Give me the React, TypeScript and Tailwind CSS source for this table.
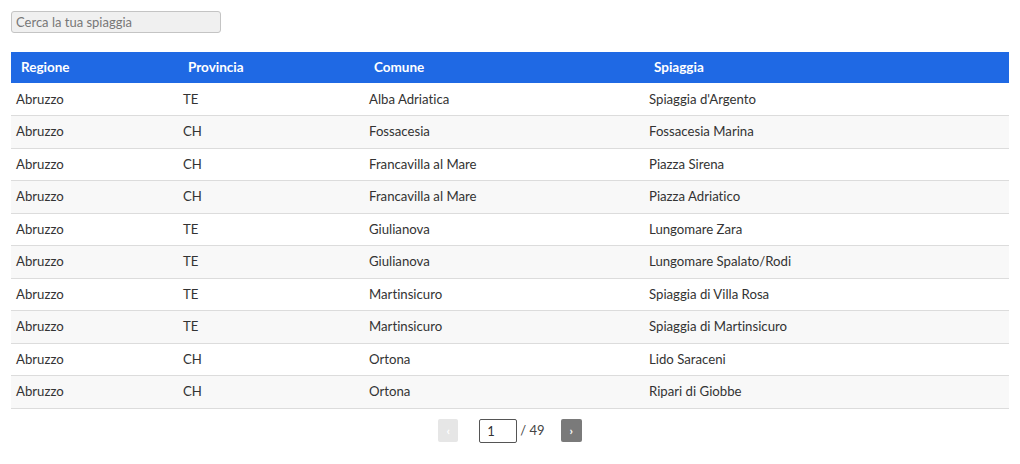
import { useState } from "react";

const rows = [
  ["Abruzzo", "TE", "Alba Adriatica", "Spiaggia d'Argento"],
  ["Abruzzo", "CH", "Fossacesia", "Fossacesia Marina"],
  ["Abruzzo", "CH", "Francavilla al Mare", "Piazza Sirena"],
  ["Abruzzo", "CH", "Francavilla al Mare", "Piazza Adriatico"],
  ["Abruzzo", "TE", "Giulianova", "Lungomare Zara"],
  ["Abruzzo", "TE", "Giulianova", "Lungomare Spalato/Rodi"],
  ["Abruzzo", "TE", "Martinsicuro", "Spiaggia di Villa Rosa"],
  ["Abruzzo", "TE", "Martinsicuro", "Spiaggia di Martinsicuro"],
  ["Abruzzo", "CH", "Ortona", "Lido Saraceni"],
  ["Abruzzo", "CH", "Ortona", "Ripari di Giobbe"],
];

const columns = ["Regione", "Provincia", "Comune", "Spiaggia"];

export default function App() {
  const [search, setSearch] = useState("");
  const [page, setPage] = useState("1");

  return (
    <div className="px-[11px] pt-[11px] text-[13px] text-[#333] font-['Lato','Noto_Sans',sans-serif] [font-variant-ligatures:none]">
      <input
        value={search}
        onChange={(e) => setSearch(e.currentTarget.value)}
        placeholder="Cerca la tua spiaggia"
        className="w-[210px] h-[22px] px-[4px] bg-[#f0f0f0] border border-[#c4c4c4] rounded-[3px] text-[13px] placeholder:text-[#777] outline-none"
      />

      <table className="mt-[19px] w-[998px] table-fixed border-collapse">
        <colgroup>
          <col className="w-[167px]" />
          <col className="w-[186px]" />
          <col className="w-[280px]" />
          <col />
        </colgroup>
        <thead>
          <tr className="bg-[#1f69e4] h-[31px]">
            {columns.map((c) => (
              <th key={c} className="text-left text-white font-bold pl-[10px] text-[13.5px]">
                {c}
              </th>
            ))}
          </tr>
        </thead>
        <tbody>
          {rows.map((r, i) => (
            <tr
              key={i}
              className={`h-[32.5px] border-b border-[#dcdcdc] ${i % 2 === 1 ? "bg-[#f8f8f8]" : "bg-white"}`}
            >
              {r.map((cell, j) => (
                <td key={j} className="pl-[5px] pt-[1px] text-[13.2px]">
                  {cell}
                </td>
              ))}
            </tr>
          ))}
        </tbody>
      </table>

      <div className="flex items-center justify-center mt-[10px] text-[13px]">
        <button className="w-[20px] h-[23px] rounded-[2px] bg-[#e6e6e6] text-white text-[12px] font-bold leading-none">
          ‹
        </button>
        <input
          value={page}
          onChange={(e) => setPage(e.currentTarget.value)}
          className="ml-[21px] w-[38px] h-[24px] border border-[#555] rounded-[2px] px-[7px] text-[13px] outline-none"
        />
        <span className="ml-[3px] text-[#444]">/ 49</span>
        <button className="ml-[16px] w-[21px] h-[23px] rounded-[2px] bg-[#7a7a7a] text-white text-[12px] font-bold leading-none">
          ›
        </button>
      </div>
    </div>
  );
}
